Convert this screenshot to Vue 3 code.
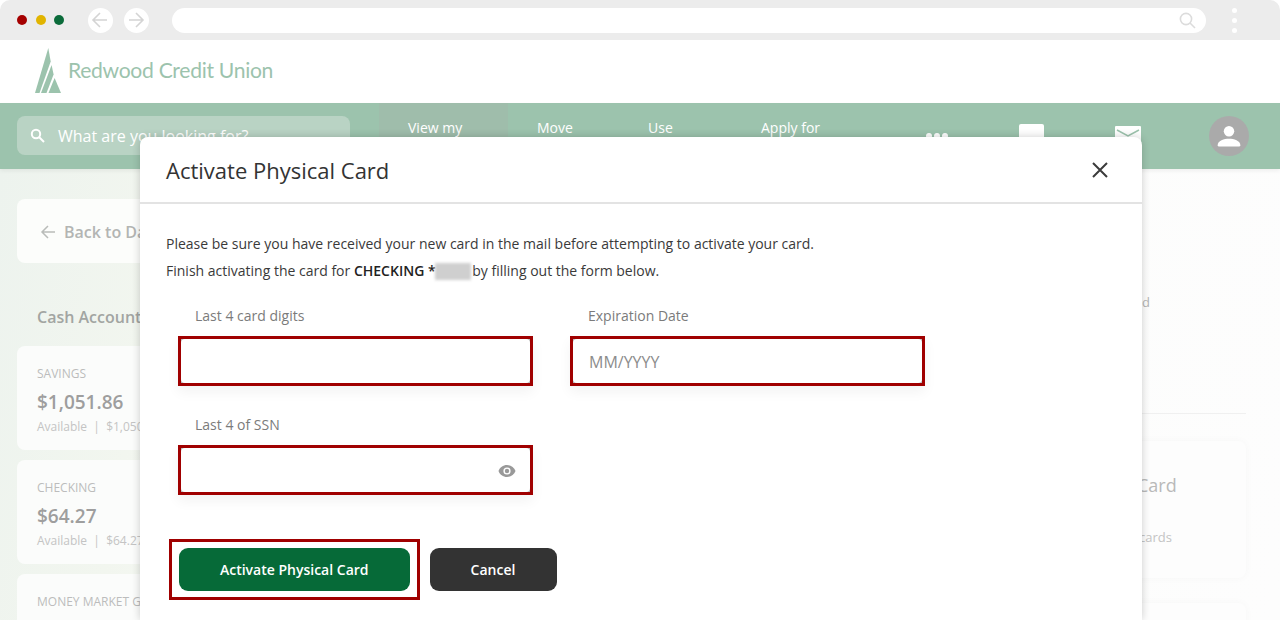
<script setup>
const cards = [
  { label: 'SAVINGS', amount: '$1,051.86', avail: 'Available  |  $1,050' },
  { label: 'CHECKING', amount: '$64.27', avail: 'Available  |  $64.27' },
  { label: 'MONEY MARKET G', amount: '', avail: '' },
]
</script>

<template>
  <div class="page">
    <header class="chrome">
      <span class="dot red"></span><span class="dot yellow"></span><span class="dot green"></span>
      <span class="round first">
        <svg width="18" height="18" viewBox="0 0 18 18" fill="none" stroke="#d4d4d4" stroke-width="1.6"><path d="M16 9H2M9 2L2 9l7 7"/></svg>
      </span>
      <span class="round">
        <svg width="18" height="18" viewBox="0 0 18 18" fill="none" stroke="#d4d4d4" stroke-width="1.6"><path d="M2 9h14M9 2l7 7-7 7"/></svg>
      </span>
      <div class="url">
        <svg width="17" height="17" viewBox="0 0 17 17" fill="none" stroke="#dcdcdc" stroke-width="1.6"><circle cx="7" cy="7" r="5.6"/><path d="M11 11l5 5"/></svg>
      </div>
      <div class="kebab"><i></i><i></i><i></i></div>
    </header>

    <div class="brand">
      <svg class="logo" width="27" height="45" viewBox="0 0 27 45" fill="#9cc3ad">
        <path d="M13.300 0L15.700 13.500 4.500 45H0z"/>
        <path d="M16.600 17L18.600 26.500 11.500 45H6z"/>
        <path d="M19.600 30L26 45H13.500z"/>
      </svg>
      <span class="brand-name">Redwood Credit Union</span>
    </div>

    <nav class="nav">
      <div class="search">
        <svg width="15" height="15" viewBox="0 0 15 15" fill="none" stroke="#fff" stroke-width="2"><circle cx="6" cy="6" r="4.200"/><path d="M9 9l5 5"/></svg>
        <span class="search-text">What are you looking for?</span>
      </div>
      <div class="nav-item active">View my</div>
      <div class="nav-item move">Move</div>
      <div class="nav-item use">Use</div>
      <div class="nav-item apply">Apply for</div>
      <div class="nav-icons">
        <div class="ic-dots"><i></i><i></i><i></i></div>
        <div class="ic-square"></div>
        <svg class="ic-mail" width="26" height="20" viewBox="0 0 26 20"><rect width="26" height="20" rx="1" fill="#fff"/><path d="M2 4l11 6 11-6" fill="none" stroke="#9cc3ad" stroke-width="1.500"/></svg>
        <div class="avatar">
          <svg width="26" height="24" viewBox="0 0 26 24" fill="#fff"><circle cx="13" cy="7" r="5.500"/><path d="M1 22c0-5 7-7 12-7s12 2 12 7c0 1-1 1-2 1H3c-1 0-2 0-2-1z"/></svg>
        </div>
      </div>
    </nav>

    <main class="bg">
      <aside class="side">
        <div class="back">
          <svg width="16" height="14" viewBox="0 0 16 14" fill="none" stroke="#b9bcb9" stroke-width="1.500"><path d="M15 7H2M8 1L2 7l6 6"/></svg>
          <span class="nowrap">Back to Dashboard</span>
        </div>
        <h3>Cash Accounts</h3>
        <div v-for="c in cards" :key="c.label" class="acct">
          <div class="acct-label">{{ c.label }}</div>
          <div v-if="c.amount" class="acct-amount">{{ c.amount }}</div>
          <div v-if="c.avail" class="acct-avail">{{ c.avail }}</div>
        </div>
      </aside>
      <section class="right">
        <div class="frag-d">d</div>
        <hr />
        <div class="card-tile">
          <div class="tile-title">Card</div>
          <div class="tile-sub">cards</div>
        </div>
        <div class="card-tile small"></div>
      </section>
    </main>

    <div class="modal">
      <div class="modal-head">
        <h2>Activate Physical Card</h2>
        <svg width="16" height="16" viewBox="0 0 16 16" stroke="#3b3b3b" stroke-width="2"><path d="M1 1l14 14M15 1L1 15"/></svg>
      </div>
      <div class="modal-body">
        <p>Please be sure you have received your new card in the mail before attempting to activate your card.</p>
        <p>Finish activating the card for <b>CHECKING *</b><span class="blur"></span> by filling out the form below.</p>
        <div class="form">
          <label class="field">
            <span class="lbl">Last 4 card digits</span>
            <span class="input"></span>
          </label>
          <label class="field second">
            <span class="lbl">Expiration Date</span>
            <span class="input ph"><span class="val">MM/YYYY</span></span>
          </label>
          <label class="field">
            <span class="lbl">Last 4 of SSN</span>
            <span class="input eye">
              <svg class="val" width="18" height="12" viewBox="0 0 18 12"><path d="M9 0C5 0 1.800 2.500 0.500 6 1.800 9.500 5 12 9 12s7.200-2.500 8.500-6C16.200 2.500 13 0 9 0z" fill="#999"/><circle cx="9" cy="6" r="3.600" fill="#fff"/><circle cx="9" cy="6" r="2.200" fill="#999"/></svg>
            </span>
          </label>
        </div>
        <div class="actions">
          <div class="outline"><button class="btn go">Activate Physical Card</button></div>
          <button class="btn cancel">Cancel</button>
        </div>
      </div>
    </div>
  </div>
</template>

<style>
html, body { margin: 0; background: #fff; overflow: hidden; }
</style>

<style scoped>
.page { position: relative; width: 1280px; height: 620px; overflow: hidden; font-family: "Open Sans", "Liberation Sans", sans-serif; color: #333; background: #fff; }
.chrome { height: 40px; background: #ececec; display: flex; align-items: center; box-sizing: border-box; padding-left: 17px; border-radius: 10px 10px 0 0; }
.dot { width: 10px; height: 10px; border-radius: 50%; margin-right: 8.500px; }
.red { background: #a50000; }
.yellow { background: #e1b400; }
.green { background: #0b6b3a; }
.round { width: 25px; height: 25px; border-radius: 50%; background: #fff; display: flex; align-items: center; justify-content: center; margin-right: 11px; }
.round.first { margin-left: 15px; }
.url { width: 1034px; height: 25px; margin-left: 12px; background: #fff; border-radius: 13px; display: flex; align-items: center; justify-content: flex-end; padding-right: 10px; box-sizing: border-box; }
.kebab { display: flex; flex-direction: column; gap: 5px; margin-left: 26px; }
.kebab i { width: 5px; height: 5px; border-radius: 50%; background: #fff; }
.brand { height: 63px; display: flex; align-items: center; padding-left: 35px; gap: 6px; box-sizing: border-box; }
.logo { margin-top: -3px; }
.brand-name { font-family: "Lato", sans-serif; font-size: 21.100px; color: #9cc3ad; letter-spacing: -0.300px; margin-top: -4px; }
.nav { height: 66px; background: #9cc3ad; display: flex; position: relative; box-shadow: 0 2px 4px rgba(0,0,0,.06); z-index: 1; }
.search { position: relative; width: 333px; height: 39px; margin: 13px 0 0 17px; background: #b9d3c4; border-radius: 8px; display: flex; align-items: center; padding-left: 13px; gap: 13px; color: #fff; font-size: 16px; box-sizing: border-box; }
.nav-item { color: #fff; font-size: 14px; padding-top: 15px; box-sizing: border-box; }
.active { margin-left: 29px; width: 129px; background: #9fbdab; padding-left: 29px; }
.move { margin-left: 29px; width: 111px; }
.use { width: 113px; }
.apply { width: 100px; }
.nav-icons { position: relative; flex: 1; }
.ic-dots { position: absolute; left: 65px; top: 30px; display: flex; gap: 2px; }
.ic-dots i { width: 6px; height: 6px; border-radius: 50%; background: #fff; }
.ic-square { position: absolute; left: 158px; top: 21px; width: 25px; height: 25px; background: #fff; border-radius: 2px; }
.ic-mail { position: absolute; left: 254px; top: 23px; }
.avatar { position: absolute; left: 348px; top: 13px; width: 40px; height: 40px; border-radius: 50%; background: #aaa; display: flex; align-items: center; justify-content: center; }
.avatar svg { transform: scale(.95); }

.bg { position: absolute; inset: 169px 0 0 0; background: linear-gradient(100deg, #edf3ee 0%, #f2f6ef 13%, #fbfcfa 30%, #fdfdfd 100%); }
.side { position: absolute; left: 17px; top: 30px; width: 123px; overflow: hidden; white-space: nowrap; }
.back { width: 300px; height: 64px; background: #fcfdfb; border-radius: 8px; display: flex; align-items: center; gap: 8px; padding: 2px 0 0 23px; color: #b3b5b3; font-size: 16px; font-weight: 600; box-sizing: border-box; }
h3 { margin: 43px 0 18px 20px; font-size: 16px; line-height: 22px; font-weight: 600; color: #a2a5a2; }
.acct { width: 300px; height: 104px; background: #fbfcfb; border-radius: 8px; margin-bottom: 10px; padding: 20px 0 0 20px; box-sizing: border-box; }
.acct-label { font-size: 12px; line-height: 16px; color: #bcbcbc; }
.acct-amount { font-size: 19px; line-height: 27px; margin-top: 7px; font-weight: 600; color: #9e9e9e; }
.acct-avail { font-size: 12px; line-height: 16px; margin-top: 3px; color: #c4c4c4; white-space: pre; }
.right { position: absolute; left: 1000px; top: 0; width: 246px; }
.frag-d { position: absolute; left: 142px; top: 124px; font-size: 13px; color: #b5b5b5; }
hr { position: absolute; left: 0; right: 0; top: 244px; margin: 0; border: 0; height: 1px; background: #f0f0f0; }
.card-tile { position: absolute; left: 0; right: 0; top: 272px; height: 137px; background: #fdfdfd; border-radius: 8px; box-shadow: 0 0 8px rgba(0,0,0,.03); }
.card-tile.small { top: 434px; height: 60px; }
.tile-title { position: absolute; left: 137px; top: 32px; font-size: 18px; color: #b9b9b9; }
.tile-sub { position: absolute; left: 139px; top: 87px; font-size: 13px; color: #c4c4c4; }

.modal { position: absolute; left: 140px; top: 137px; width: 1002px; height: 483px; background: #fff; border-radius: 8px 8px 0 0; box-shadow: 0 0 8px rgba(0,0,0,.2); z-index: 2; }
.modal-head { height: 65px; border-bottom: 2px solid #e3e3e3; display: flex; align-items: center; justify-content: space-between; padding: 0 34px 0 26px; }
h2 { margin: 0; font-size: 22px; font-weight: 400; color: #333; }
.modal-body { padding: 29px 26px 0; }
p { margin: 0 0 6px; font-size: 14px; line-height: 21px; color: #3a3a3a; }
b { font-weight: 600; color: #222; }
.blur { display: inline-block; width: 36px; height: 17px; vertical-align: -4px; margin: 0 -2px 0 -1px; background: #cfcfcf; filter: blur(1.500px); }
.form { display: grid; grid-template-columns: 355px 355px; column-gap: 37px; row-gap: 29px; margin-top: 25px; margin-left: 12px; }
.field { display: flex; flex-direction: column; gap: 10px; }
.lbl { font-size: 14px; line-height: 20px; color: #7b7b7b; padding-left: 17px; }
.second .lbl { padding-left: 18px; }
.input { position: relative; height: 50px; border: 3px solid #a00000; box-sizing: border-box; background: #b5b5b5; box-shadow: 0 6px 12px rgba(0,0,0,.05); display: flex; align-items: center; }
.input::before { content: ""; position: absolute; inset: 0; background: #fff; border-radius: 4px; }
.val { position: relative; top: 1px; }
.ph { font-size: 16px; color: #8c8c8c; padding-left: 16px; }
.eye { justify-content: flex-end; padding-right: 14px; }
.actions { display: flex; align-items: center; margin-top: 44px; margin-left: 3px; gap: 10px; }
.outline { border: 3px solid #a00000; padding: 6px 7px; }
.btn { border: 0; height: 43px; border-radius: 9px; color: #fff; font: 600 14px "Open Sans", sans-serif; }
.go { width: 230.500px; background: #066a38; display: block; }
.cancel { width: 127px; background: #333; }
</style>
